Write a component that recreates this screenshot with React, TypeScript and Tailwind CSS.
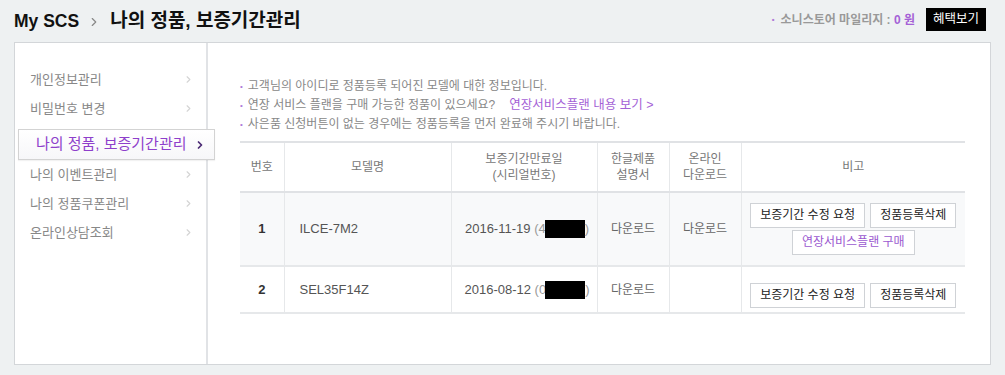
import { ChevronRight } from 'lucide-react';

const font = { fontFamily: '"Liberation Sans", "Noto Sans CJK KR", sans-serif' };

const menu = [
  { label: '개인정보관리' },
  { label: '비밀번호 변경' },
  { label: '나의 정품, 보증기간관리', active: true },
  { label: '나의 이벤트관리' },
  { label: '나의 정품쿠폰관리' },
  { label: '온라인상담조회' },
];

const rows = [
  { no: 1, model: 'ILCE-7M2', date: '2016-11-19', serial: '4', manual: true, online: true, plan: true },
  { no: 2, model: 'SEL35F14Z', date: '2016-08-12', serial: '0', manual: true, online: false, plan: false },
];

function Btn({ children, purple }: { children: React.ReactNode; purple?: boolean }) {
  return (
    <button
      className={
        'h-[25px] px-[9px] border border-[#cfd2d6] bg-white text-[12px] leading-[23px] ' +
        (purple ? 'text-[#9b59d0]' : 'text-[#222]')
      }
    >
      {children}
    </button>
  );
}

function App() {
  return (
    <div className="w-[1005px] h-[375px] bg-[#eef1f2] overflow-hidden" style={font}>
      <header className="h-[42px] pl-[14px] pr-[19px] flex items-center justify-between">
        <h1 className="flex items-center font-bold text-[#111] pt-[1px]">
          <span className="text-[17.5px]">My SCS</span>
          <ChevronRight size={14} strokeWidth={2} className="text-[#888] ml-[8px] mr-[9px]" />
          <span className="text-[19px]">나의 정품, 보증기간관리</span>
        </h1>
        <div className="flex items-center gap-[11px] -mt-[3px]">
          <span className="text-[12px] font-bold text-[#999]">
            <span className="text-[#b07ad8] text-[8px] align-middle mr-[6px]">•</span>
            소니스토어 마일리지 : <span className="text-[#a461d6]">0 원</span>
          </span>
          <span className="h-[23px] w-[60px] bg-black text-white text-[12.5px] flex items-center justify-center">
            혜택보기
          </span>
        </div>
      </header>

      <div className="mx-[14px] h-[323px] border border-[#d3d6d9] bg-white flex">
        <aside className="w-[193px] shrink-0 border-r-[2px] border-[#e1e3e6] pt-[22px] relative">
          {menu.map((m) =>
            m.active ? (
              <div
                key={m.label}
                className="relative z-10 ml-[3px] w-[197px] h-[31px] mt-[6px] border border-[#d3d3d3] bg-gradient-to-b from-white to-[#f7f7f9] flex items-center justify-between pl-[17px] pr-[8px] shadow-[0_1px_1px_rgba(0,0,0,0.05)]"
              >
                <span className="text-[15px] text-[#8e3fcb]">{m.label}</span>
                <ChevronRight size={12} strokeWidth={3.5} className="text-[#4b2a74]" />
              </div>
            ) : (
              <div key={m.label} className="h-[29px] flex items-center justify-between pl-[15px] pr-[12px]">
                <span className="text-[13px] text-[#888]">{m.label}</span>
                <ChevronRight size={11} strokeWidth={2.5} className="text-[#d4d4d4]" />
              </div>
            )
          )}
        </aside>

        <main className="flex-1 pl-[32px] pt-[34px]">
          <ul className="text-[12px] leading-[18.5px] text-[#888]">
            <li>
              <span className="text-[#b07ad8] text-[8px] mr-[5px] align-middle">•</span>
              고객님의 아이디로 정품등록 되어진 모델에 대한 정보입니다.
            </li>
            <li>
              <span className="text-[#b07ad8] text-[8px] mr-[5px] align-middle">•</span>
              연장 서비스 플랜을 구매 가능한 정품이 있으세요?
              <span className="ml-[14px] text-[#a461d6] text-[12.5px]">연장서비스플랜 내용 보기 &gt;</span>
            </li>
            <li>
              <span className="text-[#b07ad8] text-[8px] mr-[5px] align-middle">•</span>
              사은품 신청버튼이 없는 경우에는 정품등록을 먼저 완료해 주시기 바랍니다.
            </li>
          </ul>

          <table className="mt-[7px] w-[725px] border-collapse text-[12px] text-[#555] table-fixed">
            <colgroup>
              <col className="w-[44px]" />
              <col className="w-[167px]" />
              <col className="w-[146px]" />
              <col className="w-[72px]" />
              <col className="w-[72px]" />
              <col />
            </colgroup>
            <thead>
              <tr className="h-[50px] border-t-[2px] border-b-[2px] border-[#e0e2e5] text-[#777] text-[12px] leading-[16px]">
                <th className="font-normal">번호</th>
                <th className="font-normal border-l border-[#e6e8ea]">모델명</th>
                <th className="font-normal border-l border-[#e6e8ea]">
                  보증기간만료일
                  <br />
                  (시리얼번호)
                </th>
                <th className="font-normal border-l border-[#e6e8ea]">
                  한글제품
                  <br />
                  설명서
                </th>
                <th className="font-normal border-l border-[#e6e8ea]">
                  온라인
                  <br />
                  다운로드
                </th>
                <th className="font-normal border-l border-[#e6e8ea]">비고</th>
              </tr>
            </thead>
            <tbody>
              {rows.map((r) => (
                <tr
                  key={r.no}
                  className={
                    'border-b-[2px] border-[#e6e8ea] ' + (r.plan ? 'h-[74px] bg-[#f8f9fa]' : 'h-[47px]')
                  }
                >
                  <td className="text-center font-bold text-[#333] text-[13px]">{r.no}</td>
                  <td className="border-l border-[#e6e8ea] pl-[15px] text-[13px] text-[#555]">{r.model}</td>
                  <td className="border-l border-[#e6e8ea] text-center text-[13px] text-[#555]">
                    <span className="ml-[6px]">{r.date}</span>{' '}
                    <span className="text-[#999]">
                      ({r.serial}
                      <span className="inline-block w-[40px] h-[18px] bg-black align-middle -ml-[1px] -mt-[2px]" />)
                    </span>
                  </td>
                  <td className="border-l border-[#e6e8ea] text-center text-[#666] text-[12px]">
                    {r.manual ? '다운로드' : ''}
                  </td>
                  <td className="border-l border-[#e6e8ea] text-center text-[#666] text-[12px]">
                    {r.online ? '다운로드' : ''}
                  </td>
                  <td className="border-l border-[#e6e8ea]">
                    <div className={'flex flex-col items-center gap-[2px] ' + (r.plan ? '' : 'pt-[13px] pb-[2px]')}>
                      <div className="flex gap-[5px]">
                        <Btn>보증기간 수정 요청</Btn>
                        <Btn>정품등록삭제</Btn>
                      </div>
                      {r.plan && <Btn purple>연장서비스플랜 구매</Btn>}
                    </div>
                  </td>
                </tr>
              ))}
            </tbody>
          </table>
        </main>
      </div>
    </div>
  );
}

export default App;
